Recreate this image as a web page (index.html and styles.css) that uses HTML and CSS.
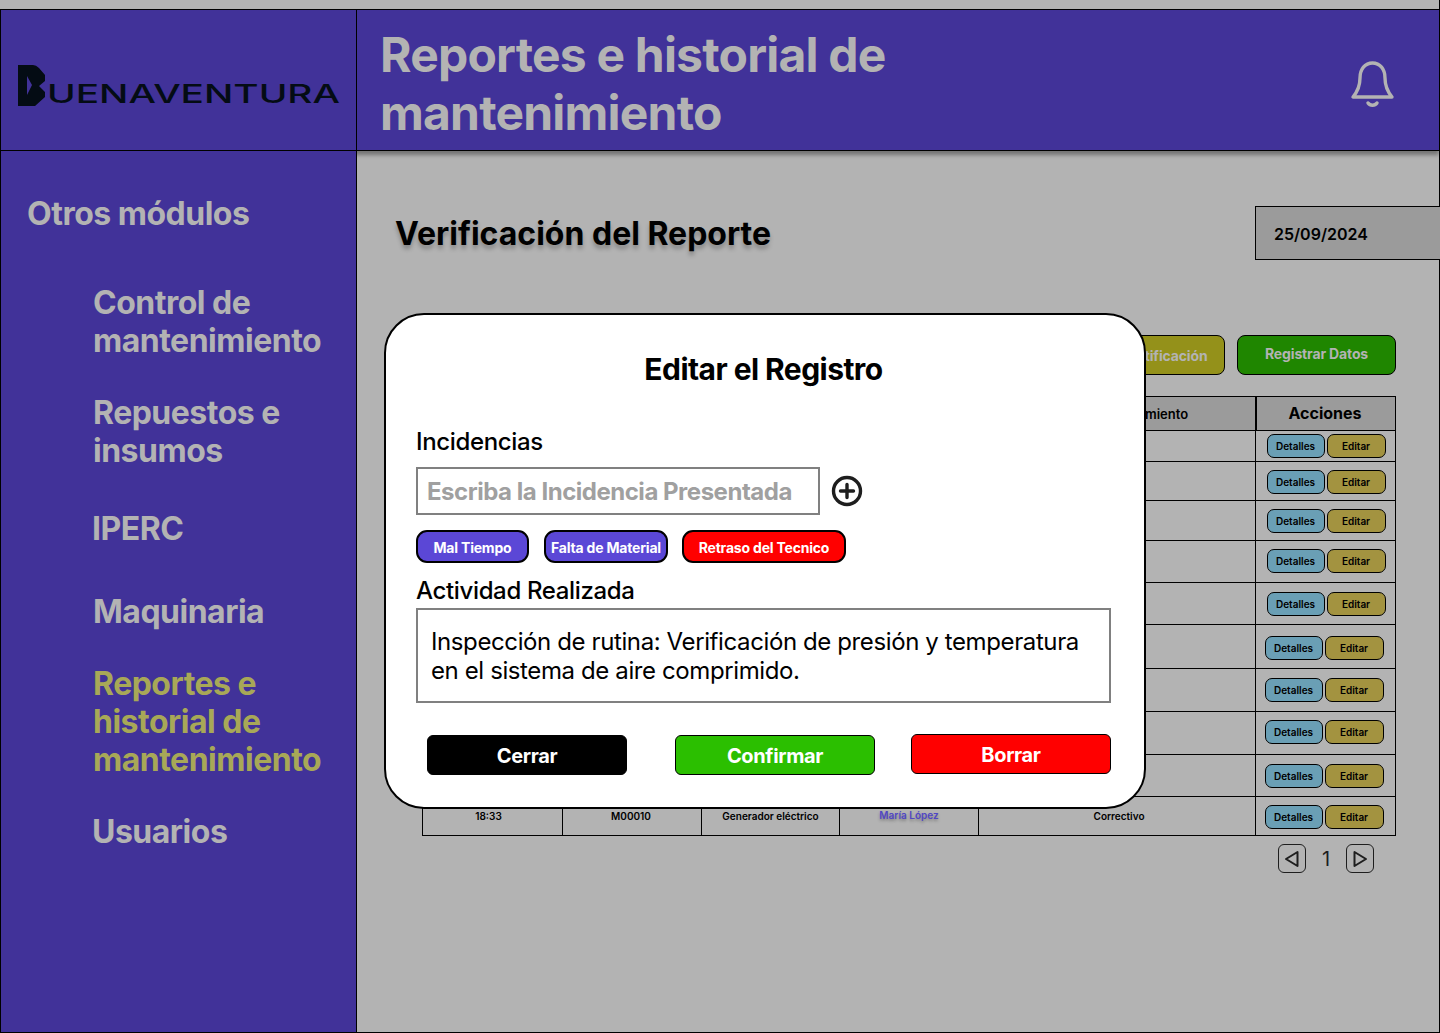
FILE: index.html
```html
<!DOCTYPE html>
<html lang="es">
<head>
<meta charset="utf-8">
<title>Reportes e historial de mantenimiento</title>
<link rel="stylesheet" href="styles.css">
</head>
<body>
<div class="app">
  <header class="topbar">
    <div class="brand">
      <svg class="logo" width="324" height="44" viewBox="0 0 324 44" aria-label="Buenaventura">
        <path fill-rule="evenodd" fill="#040c14" d="M1 1H16Q19 1 22 4L28 11V17L22 22L28 28V33L18 42H1ZM10 12L15 21L10 31Z"/>
        <text class="logo-text" x="30" y="39" textLength="293" lengthAdjust="spacingAndGlyphs">UENAVENTURA</text>
      </svg>
    </div>
    <div class="topbar-main">
      <h1 class="page-title">Reportes e historial de mantenimiento</h1>
      <svg class="bell" width="44" height="48" viewBox="0 0 44 48" fill="none" stroke="#b3b3b3" stroke-width="3.4" stroke-linecap="round" stroke-linejoin="round">
        <path d="M3 37H42C37 31 35 26 35 18C35 9 30 3 22.5 3C15 3 10 9 10 18C10 26 8 31 3 37Z"/>
        <path d="M18 43C20 46 25 46 27 43"/>
      </svg>
    </div>
  </header>
  <div class="body-row">
    <nav class="sidebar">
      <h2 class="side-heading">Otros módulos</h2>
      <ul class="side-list">
        <li class="side-item">Control de mantenimiento</li>
        <li class="side-item">Repuestos e insumos</li>
        <li class="side-item side-item-out side-item-iperc">IPERC</li>
        <li class="side-item side-item-maq">Maquinaria</li>
        <li class="side-item side-item-active">Reportes e historial de mantenimiento</li>
        <li class="side-item side-item-out">Usuarios</li>
      </ul>
    </nav>
    <main class="content">
      <div class="content-head">
        <h2 class="content-title">Verificación del Reporte</h2>
        <div class="date-box">25/09/2024</div>
      </div>
      <div class="action-row">
        <button class="action action-olive">Certificación</button>
        <button class="action action-green">Registrar Datos</button>
      </div>
      <div class="grid-table">
        <div class="row row-head"><div class="cell"></div><div class="cell"></div><div class="cell"></div><div class="cell"></div><div class="cell head-type">Tipo de mantenimiento</div><div class="cell head-actions">Acciones</div></div>
        <div class="row"><div class="cell"></div><div class="cell"></div><div class="cell"></div><div class="cell"></div><div class="cell"></div><div class="cell acts"><button class="mini mini-blue">Detalles</button><button class="mini mini-gold">Editar</button></div></div>
        <div class="row"><div class="cell"></div><div class="cell"></div><div class="cell"></div><div class="cell"></div><div class="cell"></div><div class="cell acts acts-down"><button class="mini mini-blue">Detalles</button><button class="mini mini-gold">Editar</button></div></div>
        <div class="row"><div class="cell"></div><div class="cell"></div><div class="cell"></div><div class="cell"></div><div class="cell"></div><div class="cell acts"><button class="mini mini-blue">Detalles</button><button class="mini mini-gold">Editar</button></div></div>
        <div class="row"><div class="cell"></div><div class="cell"></div><div class="cell"></div><div class="cell"></div><div class="cell"></div><div class="cell acts acts-up"><button class="mini mini-blue">Detalles</button><button class="mini mini-gold">Editar</button></div></div>
        <div class="row"><div class="cell"></div><div class="cell"></div><div class="cell"></div><div class="cell"></div><div class="cell"></div><div class="cell acts"><button class="mini mini-blue">Detalles</button><button class="mini mini-gold">Editar</button></div></div>
        <div class="row"><div class="cell"></div><div class="cell"></div><div class="cell"></div><div class="cell"></div><div class="cell"></div><div class="cell acts acts-left acts-down"><button class="mini mini-blue">Detalles</button><button class="mini mini-gold">Editar</button></div></div>
        <div class="row"><div class="cell"></div><div class="cell"></div><div class="cell"></div><div class="cell"></div><div class="cell"></div><div class="cell acts acts-left"><button class="mini mini-blue">Detalles</button><button class="mini mini-gold">Editar</button></div></div>
        <div class="row"><div class="cell"></div><div class="cell"></div><div class="cell"></div><div class="cell"></div><div class="cell"></div><div class="cell acts acts-left acts-up"><button class="mini mini-blue">Detalles</button><button class="mini mini-gold">Editar</button></div></div>
        <div class="row"><div class="cell"></div><div class="cell"></div><div class="cell"></div><div class="cell"></div><div class="cell"></div><div class="cell acts acts-left"><button class="mini mini-blue">Detalles</button><button class="mini mini-gold">Editar</button></div></div>
        <div class="row"><div class="cell data data-time">18:33</div><div class="cell data data-code">M00010</div><div class="cell data">Generador eléctrico</div><div class="cell data data-link">María López</div><div class="cell data data-type">Correctivo</div><div class="cell acts acts-left acts-down"><button class="mini mini-blue">Detalles</button><button class="mini mini-gold">Editar</button></div></div>
      </div>
      <div class="pager">
        <button class="page-btn" aria-label="Anterior"><svg width="16" height="18" viewBox="0 0 16 18" fill="none" stroke="#1e1e1e" stroke-width="2" stroke-linejoin="round"><path d="M13.5 2V16L2 9Z"/></svg></button>
        <span class="page-num">1</span>
        <button class="page-btn" aria-label="Siguiente"><svg width="16" height="18" viewBox="0 0 16 18" fill="none" stroke="#1e1e1e" stroke-width="2" stroke-linejoin="round"><path d="M2.5 2V16L14 9Z"/></svg></button>
      </div>
    </main>
  </div>
  <section class="modal">
    <h2 class="modal-title">Editar el Registro</h2>
    <h3 class="field-label">Incidencias</h3>
    <div class="input-row">
      <div class="text-input">Escriba la Incidencia Presentada</div>
      <svg class="plus" width="32" height="32" viewBox="0 0 32 32" fill="none" stroke="#1e1e1e" stroke-linecap="round"><circle cx="16" cy="16" r="13.5" stroke-width="3.4"/><path d="M16 9.5V22.5M9.5 16H22.5" stroke-width="3.4"/></svg>
    </div>
    <div class="chips">
      <span class="chip chip-1">Mal Tiempo</span>
      <span class="chip chip-2">Falta de Material</span>
      <span class="chip chip-3">Retraso del Tecnico</span>
    </div>
    <h3 class="field-label field-label-2">Actividad Realizada</h3>
    <div class="text-area">Inspección de rutina: Verificación de presión y temperatura en el sistema de aire comprimido.</div>
    <div class="modal-actions">
      <button class="modal-btn btn-black">Cerrar</button>
      <button class="modal-btn btn-green">Confirmar</button>
      <button class="modal-btn btn-red">Borrar</button>
    </div>
  </section>
</div>
</body>
</html>
```
FILE: styles.css
```css
* { box-sizing: border-box; }
html, body { margin: 0; padding: 0; }
body {
  width: 1440px;
  height: 1033px;
  overflow: hidden;
  background: #b3b3b3;
  font-family: Inter, "Liberation Sans", sans-serif;
  color: #000;
}
h1, h2, h3, ul { margin: 0; padding: 0; }
li { list-style: none; }
button { font-family: inherit; cursor: pointer; }

.app {
  position: relative;
  width: 1440px;
  height: 1033px;
  padding-top: 9px;
  display: flex;
  flex-direction: column;
  border-right: 1px solid #000;
  border-bottom: 1px solid #000;
}

.topbar {
  height: 142px;
  flex: none;
  display: flex;
  background: #413299;
  border-top: 1px solid #000;
  border-bottom: 1px solid #000;
  box-shadow: 0 4px 4px rgba(0, 0, 0, .35);
  position: relative;
  z-index: 1;
}
.brand {
  width: 357px;
  flex: none;
  border-left: 1px solid #000;
  border-right: 1px solid #000;
  padding: 54px 0 0 16px;
}
.logo { display: block; }
.logo-text {
  font-family: Inter, sans-serif;
  font-size: 25px;
  font-weight: 500;
  fill: #040c14;
}
.topbar-main {
  flex: 1;
  display: flex;
  align-items: center;
  justify-content: space-between;
  padding: 0 45px 0 23px;
}
.page-title {
  width: 560px;
  padding-top: 8px;
  font-size: 48px;
  line-height: 58px;
  font-weight: 700;
  letter-spacing: -0.8px;
  color: #b3b3b3;
}
.bell { margin-top: 7px; }

.body-row { flex: 1; display: flex; min-height: 0; }

.sidebar {
  width: 357px;
  flex: none;
  background: #413299;
  border-left: 1px solid #000;
  border-right: 1px solid #000;
  padding: 44px 0 0 26px;
  color: #b3b3b3;
  position: relative;
  z-index: 2;
}
.side-heading {
  font-size: 32px;
  line-height: 38px;
  font-weight: 700;
  letter-spacing: -0.5px;
}
.side-list {
  margin-top: 51px;
  padding-left: 66px;
  display: flex;
  flex-direction: column;
  gap: 34px;
}
.side-item {
  width: 240px;
  font-size: 32px;
  line-height: 38px;
  font-weight: 700;
  letter-spacing: -0.5px;
}
.side-item-out { margin-left: -1px; }
.side-item-iperc { margin-top: 6px; }
.side-item-maq { margin-top: 11px; }
.side-item-active { color: #a8a857; }

.content { flex: 1; min-width: 0; position: relative; }
.content-head {
  display: flex;
  justify-content: space-between;
  align-items: center;
  height: 54px;
  margin-top: 55px;
  padding-left: 38px;
}
.content-title {
  padding-top: 2px;
  font-size: 32px;
  line-height: 38px;
  font-weight: 700;
  letter-spacing: 0;
  text-shadow: 0 4px 4px rgba(0, 0, 0, .25);
}
.date-box {
  width: 185px;
  height: 54px;
  margin-right: -1px;
  background: #9b9b9b;
  border: 1px solid #000;
  border-right: 0;
  padding: 2px 0 0 18px;
  display: flex;
  align-items: center;
  font-size: 16px;
  font-weight: 600;
}
.action-row {
  display: flex;
  justify-content: flex-end;
  gap: 12px;
  margin-top: 75px;
  padding-right: 43px;
}
.action {
  height: 40px;
  border: 1px solid #000;
  border-radius: 8px;
  color: #b3b3b3;
  font-size: 14px;
  font-weight: 700;
  letter-spacing: -0.15px;
}
.action-olive { width: 122px; background: #94911a; }
.action-green { width: 159px; background: #1f8600; padding-bottom: 4px; }

.grid-table {
  display: grid;
  width: 974px;
  margin: 21px 0 0 65px;
  grid-template-columns: 140px 139px 138px 139px 277px 139px;
  grid-template-rows: 34px 31px 39px 40px 42px 42px 44px 43px 43px 42px 39px;
  border: 1px solid #000;
  border-width: 1px 1px 0 1px;
}
.row { display: contents; }
.cell {
  border-right: 1px solid #000;
  border-bottom: 1px solid #000;
  min-width: 0;
}
.cell:last-child { border-right: 0; }
.row-head .cell { background: #9b9b9b; }
.head-type {
  display: flex;
  align-items: center;
  justify-content: center;
  font-size: 13px;
  font-weight: 600;
  padding-right: 2px;
}
.row-head .head-actions {
  border-left: 1px solid #000;
  display: flex;
  align-items: center;
  justify-content: center;
  padding: 0 2px 2px 0;
  font-size: 16px;
  font-weight: 700;
}
.data {
  font-size: 10px;
  line-height: 14px;
  font-weight: 600;
  text-align: center;
  padding-top: 12px;
}
.data-time { padding-right: 8px; }
.data-code { padding-right: 2px; }
.data-type { padding-left: 4px; }
.data-link {
  padding-top: 11px;
  color: #5147c4;
  text-shadow: 0 2px 3px rgba(0, 0, 0, .3);
}
.acts {
  display: flex;
  align-items: center;
  justify-content: center;
  gap: 2px;
  padding-left: 1px;
}
.acts-left { padding-left: 0; padding-right: 3px; }
.acts-down { padding-top: 2px; }
.acts-up { padding-bottom: 2px; }
.mini {
  height: 24px;
  padding: 0;
  border: 1px solid #000;
  border-radius: 7px;
  font-size: 10px;
  font-weight: 600;
  color: #000;
}
.mini-blue { width: 58px; background: #6a9fb5; }
.mini-gold { width: 59px; background: #a39340; }

.pager {
  display: flex;
  justify-content: flex-end;
  align-items: center;
  gap: 14px;
  margin: 8px 0 0;
  padding-right: 65px;
}
.page-btn {
  width: 28px;
  height: 29px;
  padding: 0;
  background: transparent;
  border: 1px solid #1e1e1e;
  border-radius: 6px;
  display: flex;
  align-items: center;
  justify-content: center;
}
.page-num { font-size: 20px; color: #1e1e1e; width: 12px; text-align: center; }

.modal {
  position: absolute;
  left: 384px;
  top: 313px;
  width: 762px;
  height: 496px;
  z-index: 3;
  background: #fff;
  border: 2px solid #000;
  border-radius: 40px;
  padding: 36px 33px 0 30px;
}
.modal-title {
  text-align: center;
  font-size: 30px;
  line-height: 36px;
  font-weight: 700;
  letter-spacing: -0.55px;
}
.field-label {
  margin-top: 40px;
  font-size: 24px;
  line-height: 29px;
  font-weight: 500;
  letter-spacing: -0.35px;
}
.input-row {
  display: flex;
  align-items: center;
  gap: 11px;
  margin-top: 11px;
}
.text-input {
  width: 404px;
  height: 48px;
  border: 2px solid #808080;
  padding-left: 9px;
  display: flex;
  align-items: center;
  font-size: 24px;
  font-weight: 700;
  letter-spacing: -0.48px;
  color: #a0a0a0;
  white-space: nowrap;
}
.plus { flex: none; }
.chips {
  display: flex;
  gap: 15px;
  margin-top: 15px;
}
.chip {
  height: 33px;
  padding-top: 2px;
  border: 2px solid #000;
  border-radius: 11px;
  display: flex;
  align-items: center;
  justify-content: center;
  color: #fff;
  font-size: 14px;
  font-weight: 700;
  letter-spacing: -0.2px;
  white-space: nowrap;
}
.chip-1 { width: 113px; background: #5b47d6; }
.chip-2 { width: 124px; background: #5b47d6; }
.chip-3 { width: 164px; margin-left: -1px; background: #ff0000; }
.field-label-2 { margin-top: 13px; line-height: 30px; }
.text-area {
  width: 695px;
  height: 95px;
  margin-top: 2px;
  border: 2px solid #808080;
  padding: 17px 13px 0;
  font-size: 24px;
  line-height: 29px;
  letter-spacing: -0.39px;
}
.modal-actions {
  display: flex;
  margin-top: 32px;
  padding-left: 11px;
}
.modal-btn {
  width: 200px;
  height: 40px;
  padding: 2px 0 0;
  border-radius: 6px;
  border: 1px solid #000;
  color: #fff;
  font-size: 20px;
  font-weight: 700;
  letter-spacing: -0.35px;
}
.btn-black { background: #000; }
.btn-green { background: #2bbf00; margin-left: 48px; }
.btn-red { background: #ff0000; margin-left: 36px; margin-top: -1px; }
```
